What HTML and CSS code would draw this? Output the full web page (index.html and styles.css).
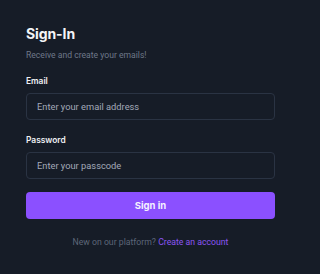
FILE: index.html
```html
<!DOCTYPE html>
<html lang="en">
<head>
<meta charset="utf-8">
<title>Sign-In</title>
<link rel="stylesheet" href="styles.css">
</head>
<body>
<main class="card">
  <h1 class="title">Sign-In</h1>
  <p class="subtitle">Receive and create your emails!</p>
  <form class="form">
    <label class="label" for="email">Email</label>
    <input class="input" id="email" type="email" placeholder="Enter your email address">
    <label class="label label-pw" for="pw">Password</label>
    <input class="input" id="pw" type="password" placeholder="Enter your passcode">
    <button class="btn" type="button">Sign in</button>
  </form>
  <p class="footer">New on our platform? <a class="link" href="#">Create an account</a></p>
</main>
</body>
</html>
```
FILE: styles.css
```css
html, body {
  margin: 0;
  padding: 0;
  background: #161c27;
}
body {
  width: 300px;
  height: 274px;
  overflow: hidden;
  font-family: Roboto, "Liberation Sans", sans-serif;
}
.card {
  padding: 24px 25px 0 26px;
  display: flex;
  flex-direction: column;
}
.title {
  margin: 0;
  font-family: Inter, "Liberation Sans", sans-serif;
  font-weight: 700;
  font-size: 14px;
  line-height: 20px;
  color: #f3f4f6;
  letter-spacing: -0.1px;
}
.subtitle {
  margin: 4px 0 0;
  font-size: 8.6px;
  line-height: 14px;
  color: #6e7889;
}
.form {
  display: flex;
  flex-direction: column;
  margin-top: 12px;
}
.label {
  font-family: Inter, "Liberation Sans", sans-serif;
  font-weight: 600;
  font-size: 8.4px;
  line-height: 14px;
  color: #eef0f4;
}
.label-pw {
  margin-top: 13px;
}
.input {
  box-sizing: border-box;
  margin-top: 5px;
  height: 27px;
  width: 100%;
  padding: 0 10px;
  background: transparent;
  border: 1px solid #2a3343;
  border-radius: 4px;
  font-family: Roboto, "Liberation Sans", sans-serif;
  font-size: 9.3px;
  color: #c9ced8;
  outline: none;
}
.input::placeholder {
  color: #a3a9b8;
}
.btn {
  margin-top: 13px;
  height: 27px;
  border: none;
  border-radius: 4px;
  background: #8b50ff;
  color: #f5f0ff;
  font-family: Inter, "Liberation Sans", sans-serif;
  font-weight: 700;
  font-size: 9.5px;
}
.footer {
  margin: 16px 0 0;
  text-align: center;
  font-size: 8.7px;
  line-height: 14px;
  color: #5d6678;
}
.link {
  color: #8b55f2;
  text-decoration: none;
}
```
